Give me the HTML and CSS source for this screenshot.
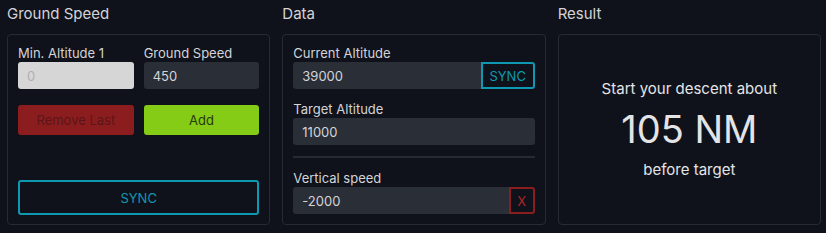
FILE: index.html
```html
<!DOCTYPE html>
<html lang="en">
<head>
    <meta charset="UTF-8">
    <meta name="viewport" content="width=device-width, initial-scale=1.0">
    <title>Descent Calculator</title>
    <link rel="stylesheet" href="styles.css">
</head>
<body>
    <div class="columns">
        <section class="column">
            <h2>Ground Speed</h2>
            <div class="panel">
                <div class="pair">
                    <div class="field">
                        <label>Min. Altitude 1</label>
                        <input class="input disabled" type="text" value="0" disabled>
                    </div>
                    <div class="field">
                        <label>Ground Speed</label>
                        <input class="input" type="text" value="450">
                    </div>
                </div>
                <div class="pair buttons">
                    <button class="btn btn-remove">Remove Last</button>
                    <button class="btn btn-add">Add</button>
                </div>
                <button class="btn btn-sync">SYNC</button>
            </div>
        </section>
        <section class="column">
            <h2>Data</h2>
            <div class="panel">
                <div class="field">
                    <label>Current Altitude</label>
                    <div class="input-group">
                        <input class="input" type="text" value="39000">
                        <button class="addon addon-sync">SYNC</button>
                    </div>
                </div>
                <div class="field spaced">
                    <label>Target Altitude</label>
                    <input class="input" type="text" value="11000">
                </div>
                <hr class="divider">
                <div class="field">
                    <label>Vertical speed</label>
                    <div class="input-group">
                        <input class="input" type="text" value="-2000">
                        <button class="addon addon-clear">X</button>
                    </div>
                </div>
            </div>
        </section>
        <section class="column">
            <h2>Result</h2>
            <div class="panel result">
                <p class="result-top">Start your descent about</p>
                <p class="result-value">105 NM</p>
                <p class="result-bottom">before target</p>
            </div>
        </section>
    </div>
</body>
</html>
```

FILE: styles.css
```css
body {
    margin: 0;
    padding: 0 5px 0 7px;
    background-color: #0f121a;
    color: #d4d4d8;
    font-family: Inter, "Noto Sans", sans-serif;
}
.columns {
    display: grid;
    grid-template-columns: repeat(3, 1fr);
    gap: 12px;
}
.column h2 {
    font-size: 15px;
    font-weight: 400;
    line-height: 20px;
    margin: 4px 0 10px;
    color: #d4d4d8;
}
.panel {
    border: 1px solid #262a33;
    border-radius: 4px;
    padding: 9px 10px 9px;
    height: 171px;
    display: flex;
    flex-direction: column;
}
.pair {
    display: grid;
    grid-template-columns: 1fr 1fr;
    gap: 10px;
}
.field label {
    display: block;
    font-size: 13px;
    line-height: 18px;
    color: #d4d4d8;
}
.field.spaced {
    margin-top: 11px;
}
.input {
    box-sizing: border-box;
    width: 100%;
    height: 27px;
    border: none;
    border-radius: 3px;
    background-color: #2a2e37;
    color: #d4d4d8;
    font-family: inherit;
    font-size: 13px;
    padding: 0 9px;
    outline: none;
}
.input.disabled {
    background-color: #d6d6d6;
    color: #b0b0b0;
}
.buttons {
    margin-top: 16px;
}
.btn {
    height: 30px;
    border: none;
    border-radius: 3px;
    font-family: inherit;
    font-size: 13px;
    cursor: pointer;
}
.btn-remove {
    background-color: #8c1d1f;
    color: #5c1517;
}
.btn-add {
    background-color: #84cc16;
    color: #263a0a;
}
.btn-sync {
    margin-top: auto;
    height: 35px;
    background: transparent;
    border: 2px solid #0e98b2;
    color: #0e98b2;
}
.input-group {
    display: flex;
}
.input-group .input {
    flex: 1;
    border-radius: 3px 0 0 3px;
}
.addon {
    box-sizing: border-box;
    height: 27px;
    background: transparent;
    border-radius: 0 3px 3px 0;
    font-family: inherit;
    font-size: 13px;
    cursor: pointer;
}
.addon-sync {
    width: 54px;
    border: 2px solid #0e98b2;
    color: #0e98b2;
}
.addon-clear {
    width: 26px;
    border: 2px solid #8c1d1f;
    color: #b3262a;
}
.divider {
    border: none;
    height: 2px;
    background-color: #262a33;
    margin: 11px 0;
}
.result {
    align-items: center;
    justify-content: center;
    text-align: center;
}
.result p {
    margin: 0;
    color: #e4e4e7;
}
.result-top,
.result-bottom {
    font-size: 15px;
    line-height: 20px;
}
.result .result-value {
    font-size: 38px;
    line-height: 46px;
    margin: 7px 0 8px;
}
```
